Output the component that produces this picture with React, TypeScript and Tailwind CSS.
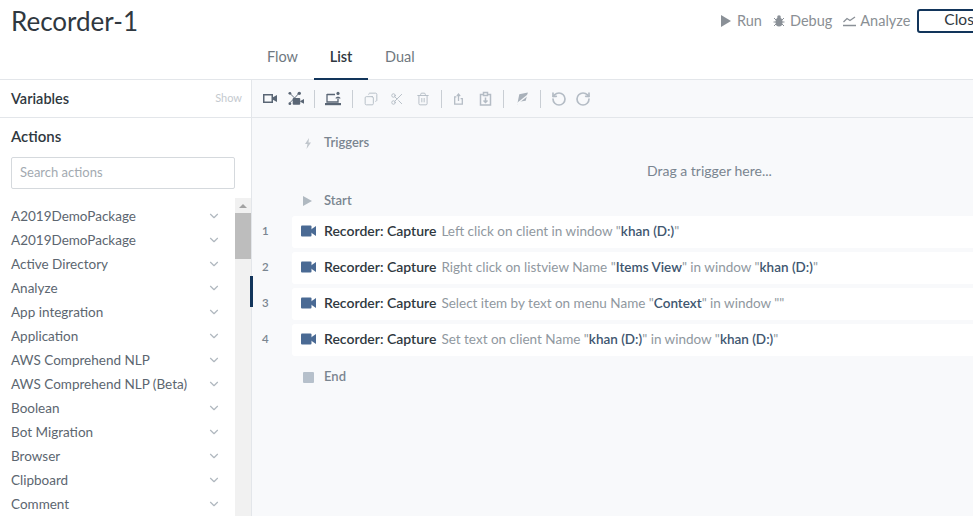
import React from 'react';
import { Copy, Scissors, Trash2, RotateCcw, RotateCw, ChevronDown } from 'lucide-react';

const packages = [
  'A2019DemoPackage',
  'A2019DemoPackage',
  'Active Directory',
  'Analyze',
  'App integration',
  'Application',
  'AWS Comprehend NLP',
  'AWS Comprehend NLP (Beta)',
  'Boolean',
  'Bot Migration',
  'Browser',
  'Clipboard',
  'Comment',
];

type Part = { text: string; bold?: boolean };

const rows: Part[][] = [
  [{ text: 'Left click on client in window "' }, { text: 'khan (D:)', bold: true }, { text: '"' }],
  [
    { text: 'Right click on listview Name "' },
    { text: 'Items View', bold: true },
    { text: '" in window "' },
    { text: 'khan (D:)', bold: true },
    { text: '"' },
  ],
  [
    { text: 'Select item by text on menu Name "' },
    { text: 'Context', bold: true },
    { text: '" in window ""' },
  ],
  [
    { text: 'Set text on client Name "' },
    { text: 'khan (D:)', bold: true },
    { text: '" in window "' },
    { text: 'khan (D:)', bold: true },
    { text: '"' },
  ],
];

const CameraIcon = () => (
  <svg width="15" height="12" viewBox="0 0 15 12" className="text-[#4a6a94] shrink-0">
    <rect x="0" y="0.5" width="10.5" height="11" rx="1" fill="currentColor" />
    <path d="M10 4.5 L15 1 V11 L10 7.5 Z" fill="currentColor" />
  </svg>
);

const Divider = () => <div className="w-px h-[18px] bg-[#c9ced4]" />;

const Toolbar = () => (
  <div className="h-[38px] flex items-center border-b border-[#e3e6ea] pl-[11px] text-[#b4bcc5] shrink-0 [&>svg]:shrink-0">
    <svg width="14" height="11" viewBox="0 0 14 11" className="text-[#5a6675]">
      <rect x="0.75" y="1.75" width="8.5" height="7.5" fill="none" stroke="currentColor" strokeWidth="1.5" />
      <path d="M9.5 4.5 L14 2 V9 L9.5 6.5 Z" fill="currentColor" />
    </svg>
    <svg width="16" height="16" viewBox="0 0 17 16" className="ml-[11px] text-[#5a6675]">
      <path d="M2 2 L7 7 M12 1.5 L7 7 M2 12 L7 7" stroke="currentColor" strokeWidth="1" fill="none" />
      <circle cx="2" cy="2" r="1.5" fill="currentColor" />
      <circle cx="12" cy="2" r="1.8" fill="currentColor" />
      <circle cx="2" cy="13" r="1.5" fill="currentColor" />
      <rect x="5" y="7" width="8" height="7" rx="1" fill="currentColor" />
      <path d="M13 10 L17 8 V13 L13 11 Z" fill="currentColor" />
    </svg>
    <div className="ml-[10px] mr-[10px]"><Divider /></div>
    <svg width="17" height="16" viewBox="0 0 17 16" className="text-[#5a6675]">
      <path d="M2 3.5 H10 M2 3 V11 H13 V8" stroke="currentColor" strokeWidth="1.3" fill="none" />
      <rect x="0" y="12" width="16" height="2.2" fill="currentColor" />
      <circle cx="13" cy="2.4" r="1.6" fill="currentColor" />
      <path d="M10.5 7.5 C10.5 5 15.5 5 15.5 7.5 Z" fill="currentColor" />
    </svg>
    <div className="ml-[10px] mr-[11px]"><Divider /></div>
    <Copy size={14} strokeWidth={1.6} className="-scale-x-100 shrink-0" />
    <Scissors size={14} strokeWidth={1.6} className="ml-[12px] shrink-0" />
    <Trash2 size={14} strokeWidth={1.6} className="ml-[12px] shrink-0" />
    <div className="ml-[11px] mr-[11px]"><Divider /></div>
    <svg width="11" height="16" viewBox="0 0 13 15" fill="none" stroke="currentColor" strokeWidth="1.5">
      <path d="M4 5 H2 V13.5 H11 V7 H9" />
      <path d="M6.5 10 V2 M4.5 4 L6.5 1.5 L8.5 4" />
    </svg>
    <svg width="13" height="16" viewBox="0 0 13 15" fill="none" stroke="currentColor" strokeWidth="1.5" className="ml-[15px]">
      <path d="M4.5 3 H1.5 V13.5 H11.5 V3 H8.5" />
      <rect x="4.5" y="1" width="4" height="3" />
      <path d="M6.5 6 V11 M4.5 9 L6.5 11 L8.5 9" />
    </svg>
    <div className="ml-[11px] mr-[11px]"><Divider /></div>
    <svg width="15" height="15" viewBox="0 0 14 14" className="text-[#a9b1ba]">
      <path d="M2 13 L4 3 L12 1.5 L10 9 L3.5 10 Z" fill="currentColor" />
      <path d="M1 12.5 L13 3" stroke="#f8f9fb" strokeWidth="1.2" />
    </svg>
    <div className="ml-[10px] mr-[10px]"><Divider /></div>
    <RotateCcw size={16} strokeWidth={2.5} className="shrink-0" />
    <RotateCw size={16} strokeWidth={2.5} className="ml-[8px] shrink-0" />
  </div>
);

const Sidebar = () => (
  <aside className="w-[252px] shrink-0 border-r border-[#e3e6ea] flex flex-col overflow-hidden bg-white">
    <div className="h-[38px] shrink-0 border-b border-[#e3e6ea] flex items-center justify-between pl-[11px] pr-[9px]">
      <span className="text-[14.5px] font-semibold text-[#2f3840]">Variables</span>
      <span className="text-[11px] text-[#c5cacf]">Show</span>
    </div>
    <div className="flex-1 flex flex-col min-h-0">
      <div className="px-[11px] pt-[9px]">
        <div className="text-[15px] font-semibold text-[#2f3840] leading-[18px]">Actions</div>
        <div className="mt-[12px] w-[224px] h-[32px] border border-[#d5d9dd] rounded-[2px] flex items-center pl-[8px] text-[13px] text-[#a3aab1]">
          Search actions
        </div>
      </div>
      <div className="flex-1 flex min-h-0 mt-[9px] overflow-hidden">
        <ul className="w-[235px] pl-[11px] pt-[6px] pr-[14px]">
          {packages.map((name, i) => (
            <li key={i} className="h-[24px] flex items-center justify-between text-[13.5px] text-[#5c6670]">
              <span>{name}</span>
              <ChevronDown size={14} strokeWidth={2} className="text-[#b0b8bf]" />
            </li>
          ))}
        </ul>
        <div className="w-[16px] bg-[#f1f1f1] flex flex-col">
          <div className="h-[15px] flex items-center justify-center">
            <div className="w-0 h-0 border-x-[4px] border-x-transparent border-b-[4px] border-b-[#a3a3a3]" />
          </div>
          <div className="h-[46px] bg-[#bdbdbd]" />
        </div>
      </div>
    </div>
  </aside>
);

const Label = ({ icon, text }: { icon: React.ReactNode; text: string }) => (
  <div className="flex items-center h-[20px] pl-[50px] text-[13px] font-semibold text-[#7a8590]">
    <span className="w-[22px] flex">{icon}</span>
    {text}
  </div>
);

const FlowList = () => (
  <div className="flex-1 bg-[#f8f9fb] flex flex-col min-w-0">
    <Toolbar />
    <div className="relative pt-[15px] flex-1">
      <Label
        icon={
          <svg width="8" height="11" viewBox="0 0 8 11" className="ml-[2px] text-[#c0c6cc]">
            <path d="M5 0 L1 6 H3.5 L2.5 11 L7 4.5 H4.5 Z" fill="currentColor" />
          </svg>
        }
        text="Triggers"
      />
      <div className="h-[38px] flex items-center pl-[395px] pb-[3px] text-[14px] text-[#7a8590]">
        Drag a trigger here...
      </div>
      <Label
        icon={
          <svg width="9" height="10" viewBox="0 0 9 10" className="ml-[1px] text-[#b0b9c1]">
            <path d="M0 0 L9 5 L0 10 Z" fill="currentColor" />
          </svg>
        }
        text="Start"
      />
      <div className="mt-[5px] flex flex-col gap-[4px]">
        {rows.map((parts, i) => (
          <div key={i} className="flex items-center h-[32px]">
            <span className="w-[40px] pl-[10px] pb-[2px] text-[11.5px] font-semibold text-[#7a8590]">{i + 1}</span>
            <div className="flex-1 h-full bg-white rounded-l-[3px] flex items-center pl-[9px] pb-[2px] whitespace-nowrap text-[13.5px]">
              <CameraIcon />
              <span className="ml-[8px] leading-[20px]">
                <span className="text-[14px] font-semibold text-[#2f3840]">Recorder: Capture</span>
                <span className="ml-[5px] text-[#9098a0]">
                  {parts.map((p, j) =>
                    p.bold ? (
                      <span key={j} className="font-semibold text-[#40566f]">{p.text}</span>
                    ) : (
                      <span key={j}>{p.text}</span>
                    ),
                  )}
                </span>
              </span>
            </div>
          </div>
        ))}
      </div>
      <div className="mt-[11px]">
        <Label
          icon={<span className="w-[11px] h-[11px] bg-[#b6c0cb] rounded-[1px] ml-[1px]" />}
          text="End"
        />
      </div>
      {/* marker on the selected row */}
      <div className="absolute left-[-2px] top-[158px] w-[3px] h-[31px] bg-[#12355b]" />
    </div>
  </div>
);

const Header = () => (
  <header className="h-[80px] shrink-0 border-b border-[#e3e6ea] bg-white">
    <div className="h-[42px] flex items-center">
      <h1 className="pl-[11px] text-[26px] text-[#2f3840] leading-none w-[721px] shrink-0">Recorder-1</h1>
      <div className="flex items-center text-[14.5px] text-[#8a8f94] shrink-0 [&>svg]:shrink-0">
        <svg width="10" height="12" viewBox="0 0 10 12" className="text-[#8a9097]">
          <path d="M0 0 L10 6 L0 12 Z" fill="currentColor" />
        </svg>
        <span className="ml-[6px]">Run</span>
        <svg width="12" height="12" viewBox="0 0 12 12" className="ml-[11px] text-[#8a9097]">
          <ellipse cx="6" cy="7" rx="3.5" ry="4.5" fill="currentColor" />
          <path d="M1 3 L3 5 M11 3 L9 5 M0.5 7 H3 M11.5 7 H9 M1 11 L3 9 M11 11 L9 9" stroke="currentColor" strokeWidth="1" />
          <circle cx="6" cy="2" r="1.8" fill="currentColor" />
        </svg>
        <span className="ml-[5px]">Debug</span>
        <svg width="13" height="11" viewBox="0 0 13 11" fill="none" stroke="#8a9097" strokeWidth="1.3" className="ml-[11px]">
          <path d="M0.5 6 L4 2.5 L7 4.5 L12 1" />
          <path d="M0 9.5 H13" strokeWidth="1.5" />
        </svg>
        <span className="ml-[4px]">Analyze</span>
        <div className="ml-[7px] w-[80px] h-[24px] shrink-0 border-2 border-[#12355b] rounded-[3px] flex items-center pl-[25px] pb-[3px] text-[#2f3840] text-[15.5px]">
          Close
        </div>
      </div>
    </div>
    <nav className="flex h-[37px] pl-[252px] text-[14.5px] text-[#6f7880]">
      <div className="w-[62px] pl-[15px] h-full flex items-center pb-[7px]">Flow</div>
      <div className="h-[38px] flex items-center pb-[6px] font-semibold text-[#2f3840] border-b-2 border-[#12355b] w-[54px] justify-center">List</div>
      <div className="pl-[17px] h-full flex items-center pb-[7px]">Dual</div>
    </nav>
  </header>
);

const App: React.FC = () => (
  <div className="w-[973px] h-[516px] overflow-hidden flex flex-col font-['Lato','Noto_Sans',sans-serif]">
    <Header />
    <div className="flex-1 flex min-h-0">
      <Sidebar />
      <FlowList />
    </div>
  </div>
);

export default App;
